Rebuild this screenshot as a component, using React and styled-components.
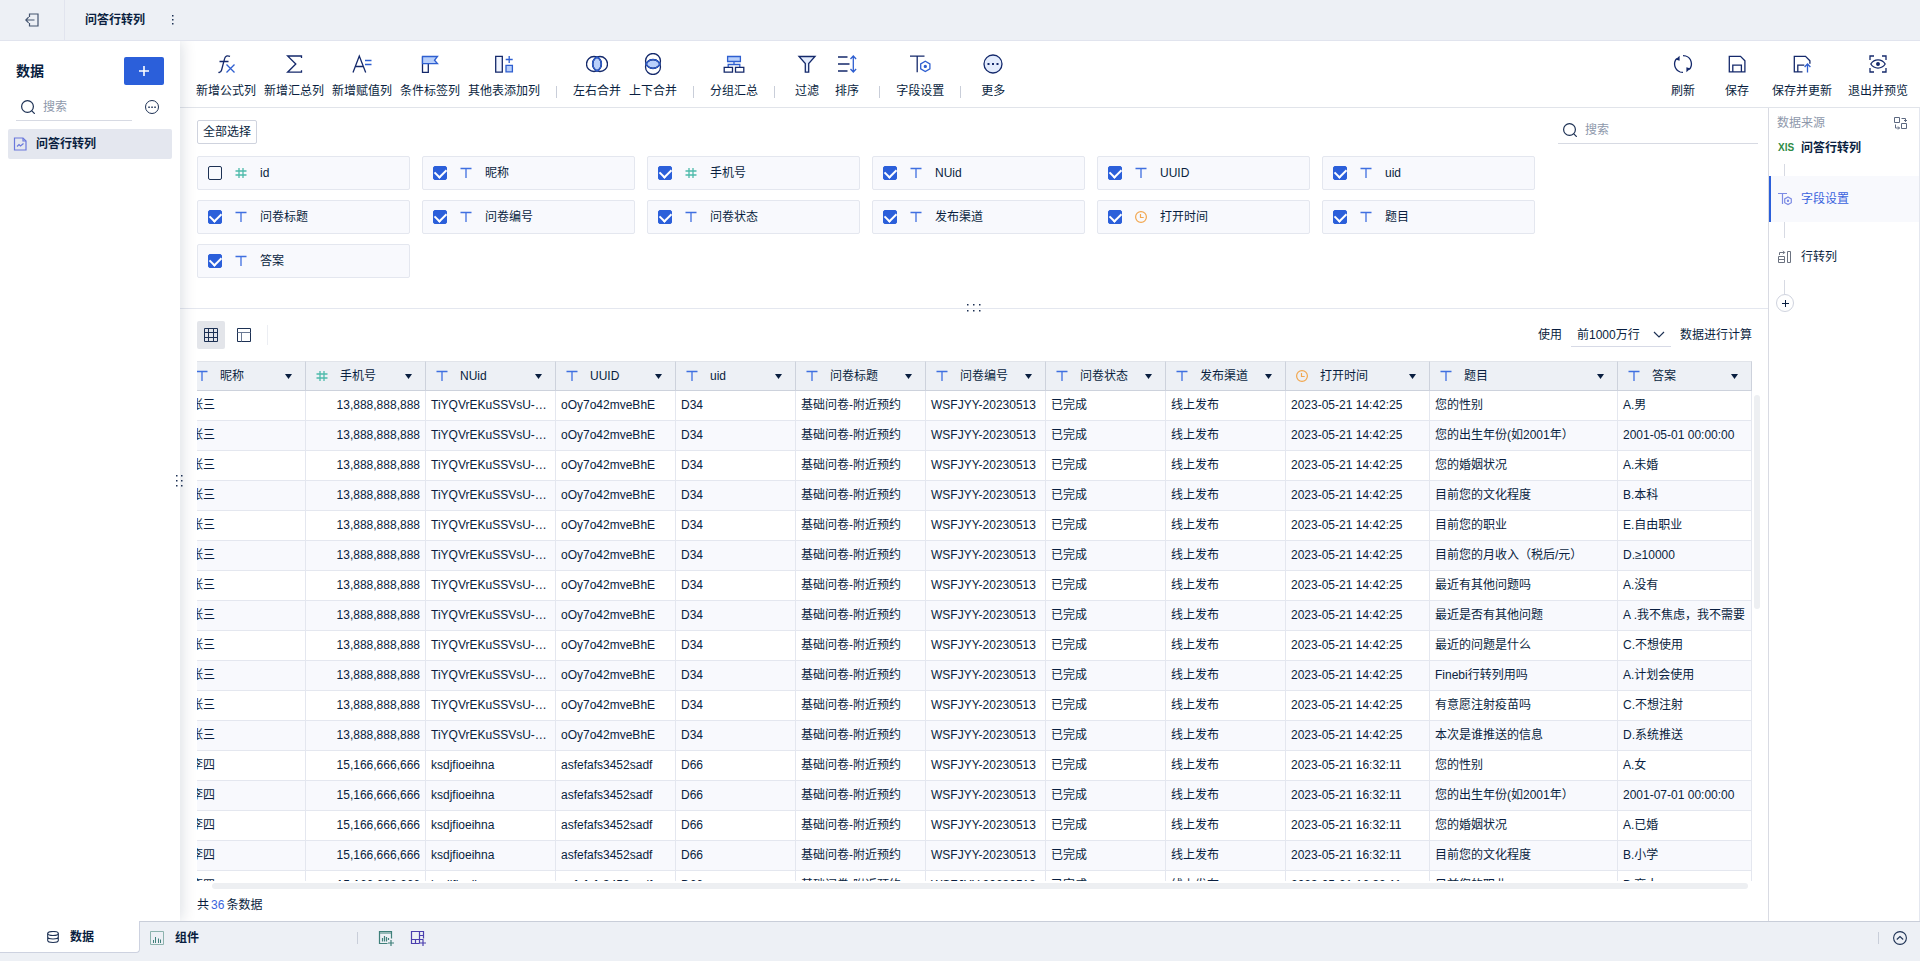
import React from 'react';
import styled, { createGlobalStyle, css } from 'styled-components';

const GlobalStyle = createGlobalStyle`
  * {
    box-sizing: border-box;
  }

  body {
    margin: 0;
    background: #fff;
    color: #091e40;
    font-family: "Liberation Sans", "Noto Sans CJK SC", sans-serif;
    font-size: 12px;
    line-height: 18px;
  }

  button, input, select {
    font: inherit;
    color: inherit;
    margin: 0;
    padding: 0;
    border: none;
    background: none;
    outline: none;
  }

  button {
    cursor: pointer;
  }

  svg {
    display: block;
    flex: none;
  }
`;

const Page = styled.div`
  display: flex;
  flex-direction: column;
  height: 100vh;
  overflow: hidden;
`;

const TopBar = styled.header`
  display: flex;
  align-items: center;
  flex: none;
  height: 41px;
  background: #edf0f5;
  border-bottom: 1px solid #e1e4ee;
`;

const BackButton = styled.button`
  display: flex;
  align-items: center;
  justify-content: center;
  width: 65px;
  height: 40px;
  border-right: 1px solid #e1e4ee;
`;

const PageTitle = styled.h1`
  margin: 0 18px 0 20px;
  font-size: 12px;
  font-weight: 700;
`;

const IconButton = styled.button`
  display: flex;
  align-items: center;
  justify-content: center;
  width: ${props => props.$size || 24}px;
  height: ${props => props.$size || 24}px;
  border-radius: 2px;
  background: ${props => (props.$active ? '#e3e5ea' : 'transparent')};
`;

const Body = styled.div`
  display: flex;
  flex: 1;
  min-height: 0;
`;

const Sidebar = styled.aside`
  position: relative;
  z-index: 1;
  flex: none;
  width: 180px;
  padding: 16px 8px;
  background: #fff;
  box-shadow: 2px 0 14px rgba(9, 30, 64, 0.14);
  clip-path: inset(0 -20px 0 0);
`;

const SideRow = styled.div`
  display: flex;
  align-items: center;
  justify-content: space-between;
  height: 28px;
  margin: 0 8px 8px;
`;

const SideTitle = styled.h2`
  margin: 0;
  font-size: 14px;
  font-weight: 700;
`;

const AddButton = styled.button`
  display: flex;
  align-items: center;
  justify-content: center;
  width: 40px;
  height: 28px;
  border-radius: 2px;
  background: #2b5fda;
`;

const SearchBox = styled.label`
  display: flex;
  align-items: center;
  gap: 8px;
  width: ${props => props.$width}px;
  height: 28px;
  padding-left: 5px;
  border-bottom: 1px solid #d7dae3;

  input {
    flex: 1;
    min-width: 0;
  }

  input::placeholder {
    color: #8e98ab;
    opacity: 1;
  }
`;

const SideItem = styled.a`
  display: flex;
  align-items: center;
  gap: 9px;
  height: 30px;
  padding-left: 5px;
  border-radius: 2px;
  background: #e4e7ef;
  color: inherit;
  font-weight: 700;
  text-decoration: none;
`;

const ResizeHandle = styled.div`
  position: absolute;
  top: 50%;
  right: -3px;
  transform: translateY(-50%);
`;

const Workspace = styled.div`
  display: flex;
  flex-direction: column;
  flex: 1;
  min-width: 0;
`;

const Toolbar = styled.div`
  display: flex;
  flex: none;
  gap: 8px;
  padding: 12px 12px 7px 16px;
  border-bottom: 1px solid #e1e4ea;
`;

const ToolGroup = styled.div`
  display: flex;
  gap: 16px;
  margin-left: auto;
`;

const ToolButton = styled.button`
  display: flex;
  flex-direction: column;
  align-items: center;
  gap: 7px;
  min-width: ${props => (props.$wide ? 38 : 32)}px;
  white-space: nowrap;
`;

const ToolDivider = styled.span`
  align-self: flex-end;
  width: 1px;
  height: 12px;
  margin: 0 8px 2px;
  background: #c9ced9;
`;

const Content = styled.div`
  display: flex;
  flex: 1;
  min-height: 0;
`;

const Center = styled.main`
  display: flex;
  flex-direction: column;
  flex: 1;
  min-width: 0;
`;

const FieldPanel = styled.section`
  position: relative;
  flex: none;
  height: 201px;
  padding: 8px 10px 0 17px;
  border-bottom: 1px solid #e4e7ef;
`;

const FieldHead = styled.div`
  display: flex;
  align-items: flex-end;
  justify-content: space-between;
  margin-bottom: 12px;
`;

const SelectAll = styled.button`
  height: 24px;
  padding: 0 5px;
  border: 1px solid #cfd3de;
  border-radius: 2px;
`;

const FieldGrid = styled.div`
  display: grid;
  grid-template-columns: repeat(auto-fill, 213px);
  gap: 10px 12px;
`;

const FieldCard = styled.label`
  display: flex;
  align-items: center;
  gap: 13px;
  height: 34px;
  padding-left: 10px;
  background: #f8f9fd;
  border: 1px solid #e4e7ef;
  border-radius: 2px;
`;

const Checkbox = styled.input.attrs({ type: 'checkbox' })`
  appearance: none;
  display: grid;
  place-content: center;
  width: 14px;
  height: 14px;
  border: 1px solid #1d3154;
  border-radius: 2px;

  &:checked {
    background: #2b5fda;
    border-color: #2b5fda;
  }

  &:checked::before {
    content: '';
    width: 9px;
    height: 6px;
    margin-bottom: 3px;
    border: solid #fff;
    border-width: 0 0 2px 2px;
    transform: rotate(-45deg);
  }
`;

const SplitHandle = styled.div`
  position: absolute;
  bottom: -4px;
  left: 50%;
  transform: translateX(-50%);
`;

const DataPanel = styled.section`
  display: flex;
  flex-direction: column;
  flex: 1;
  min-height: 0;
  padding: 12px 8px 7px 17px;
`;

const ViewBar = styled.div`
  display: flex;
  align-items: center;
  flex: none;
  gap: 5px;
  margin-bottom: 12px;
`;

const ViewDivider = styled.span`
  width: 1px;
  height: 20px;
  margin-left: 4px;
  background: #eceef3;
`;

const RowLimit = styled.div`
  display: flex;
  align-items: center;
  gap: 9px;
  margin-left: auto;
  padding-right: 8px;
`;

const SelectWrap = styled.span`
  position: relative;

  select {
    appearance: none;
    width: 100px;
    height: 24px;
    padding-left: 6px;
    border-bottom: 1px solid #d7dae6;
  }

  svg {
    position: absolute;
    right: 6px;
    top: 8px;
    pointer-events: none;
  }
`;

const TableArea = styled.div`
  display: flex;
  flex: 1;
  gap: 2px;
  min-height: 0;
`;

const TableClip = styled.div`
  display: flex;
  justify-content: flex-end;
  align-items: flex-start;
  flex: 1;
  min-width: 0;
  overflow: hidden;
`;

const VScroll = styled.div`
  flex: none;
  width: 6px;
  padding-top: 34px;

  &::before {
    content: '';
    display: block;
    height: 44%;
    border-radius: 3px;
    background: #edeff2;
  }
`;

const HScroll = styled.div`
  flex: none;
  height: 6px;
  margin: 2px 12px 7px 15px;
  border-radius: 3px;
  background: #edeff2;
`;

const DataTable = styled.table`
  flex: none;
  width: 1566px;
  table-layout: fixed;
  border-collapse: separate;
  border-spacing: 0;
`;

const cell = css`
  height: 30px;
  padding: 0 5px 2px;
  border-right: 1px solid #e4e7ef;
  border-bottom: 1px solid #e4e7ef;
  overflow: hidden;
  white-space: nowrap;
  text-overflow: ellipsis;
`;

const Th = styled.th`
  ${cell}
  padding: 0 13px 0 10px;
  border-top: 1px solid #e1e4ea;
  border-right-color: #cdd2dc;
  border-bottom-color: #cdd2dc;
  background: #edf0f5;
  font-weight: 400;

  div {
    display: flex;
    align-items: center;
    gap: 12px;
  }

  button {
    margin-left: auto;
  }
`;

const Td = styled.td`
  ${cell}
  text-align: ${props => (props.$number ? 'right' : 'left')};
`;

const Tr = styled.tr`
  &:nth-child(even) {
    background: #f8f9fd;
  }
`;

const Count = styled.p`
  flex: none;
  margin: 0;

  span {
    margin: 0 2px;
    color: #3b64dd;
  }
`;

const StepPanel = styled.aside`
  flex: none;
  width: 152px;
  border-left: 1px solid #d9dbe3;
  border-right: 1px solid #e4e7ef;
`;

const StepHead = styled.div`
  display: flex;
  align-items: center;
  justify-content: space-between;
  height: 30px;
  padding: 0 12px 0 8px;
  color: #8e98ab;
`;

const Step = styled.a`
  display: flex;
  align-items: center;
  gap: 9px;
  height: ${props => props.$height}px;
  padding-left: 7px;
  border-left: 2px solid ${props => (props.$active ? '#2b5fda' : 'transparent')};
  background: ${props => (props.$active ? '#f8f9fd' : 'transparent')};
  color: ${props => (props.$active ? '#3b64dd' : 'inherit')};
  font-weight: ${props => (props.$bold ? 700 : 400)};
  text-decoration: none;
`;

const Connector = styled.div`
  width: 1px;
  height: ${props => props.$height}px;
  margin: ${props => props.$top || 0}px 0 0 15px;
  background: #d7dae3;
`;

const AddStep = styled.button`
  display: flex;
  align-items: center;
  justify-content: center;
  width: 18px;
  height: 18px;
  margin-left: 7px;
  border: 1px solid #cfd3de;
  border-radius: 50%;
`;

const Xls = styled.span`
  width: 14px;
  color: #2e8b46;
  font-size: 10px;
`;

const Footer = styled.footer`
  display: flex;
  align-items: flex-start;
  flex: none;
  height: 40px;
  background: #edf0f5;
`;

const DataTab = styled.button`
  display: flex;
  align-items: center;
  gap: 11px;
  width: 140px;
  height: 32px;
  padding-left: 47px;
  border: solid #cdd2e0;
  border-width: 0 1px 1px 0;
  border-bottom-right-radius: 4px;
  background: #fff;
  font-weight: 700;
`;

const FooterBar = styled.div`
  display: flex;
  align-items: center;
  flex: 1;
  height: 33px;
  border-top: 1px solid #c9ced9;
`;

const ComponentTab = styled.button`
  display: flex;
  align-items: center;
  gap: 11px;
  width: 217px;
  padding-left: 10px;
  font-weight: 700;
`;

const FooterDivider = styled.span`
  width: 1px;
  height: 12px;
  margin-left: ${props => (props.$push ? 'auto' : 0)};
  background: #c9ced9;
`;

const FooterActions = styled.div`
  display: flex;
  gap: 8px;
  padding: 0 ${props => props.$right || 0}px 0 ${props => props.$left || 0}px;
`;

const navy = '#14296b';
const blue = '#2f5fd0';
const sky = '#b9d0fb';

const Icon = ({ size = 22, height, stroke = navy, width = 1.3, children }) => (
    <svg width={size} height={height || size} viewBox={`0 0 ${size} ${height || size}`} fill="none" stroke={stroke} strokeWidth={width} aria-hidden="true">
        {children}
    </svg>
);

const toolIcons = {
    formula: (
        <Icon>
            <path d="M15 3.3c-3-1.2-4.8-.3-5.4 2.4L6.6 17c-.5 1.8-1.5 2.8-3.2 2.4M4.5 8.5h9" />
            <path d="M11.5 11.5l8 8M19.5 11.5l-8 8" stroke={blue} />
        </Icon>
    ),
    sum: (
        <Icon>
            <path d="M18.5 5V3H4.6l8.2 8-8.2 8.2h13.9v-2" />
        </Icon>
    ),
    assign: (
        <Icon>
            <path d="M2 19.5L8.3 3l6.4 16.5M4.3 13.5h8" />
            <path d="M14 7.5h6.5M14 11.5h6.5" stroke={blue} />
        </Icon>
    ),
    flag: (
        <Icon>
            <path d="M3.5 3.5v15.8h5.8v-8.6" />
            <path d="M3.5 3.5h15l-3 3.8 3 3.4h-15z" fill={sky} stroke={blue} />
        </Icon>
    ),
    addColumn: (
        <Icon>
            <path d="M2.7 3.3h6.6v15.8H2.7z" fill="#f0f5ff" />
            <path d="M13 12.3h6.4v6.6H13z" fill={sky} stroke={blue} />
            <path d="M16.2 3v7M12.7 6.5h7" stroke={blue} />
        </Icon>
    ),
    mergeX: (
        <Icon>
            <path d="M11 4.1a7.7 7.7 0 0 1 0 13.8a7.7 7.7 0 0 1 0-13.8z" fill={sky} />
            <circle cx="8" cy="11" r="7.5" />
            <circle cx="14" cy="11" r="7.5" />
            <path d="M11 4.1a7.7 7.7 0 0 1 0 13.8a7.7 7.7 0 0 1 0-13.8z" stroke={blue} />
        </Icon>
    ),
    mergeY: (
        <Icon>
            <path d="M4.1 11a7.7 7.7 0 0 1 13.8 0a7.7 7.7 0 0 1-13.8 0z" fill={sky} />
            <circle cx="11" cy="8" r="7.5" />
            <circle cx="11" cy="14" r="7.5" />
            <path d="M4.1 11a7.7 7.7 0 0 1 13.8 0a7.7 7.7 0 0 1-13.8 0z" stroke={blue} />
        </Icon>
    ),
    group: (
        <Icon>
            <path d="M11 8.5v3M5.2 14.3v-2.8h11.6v2.8" stroke={blue} />
            <path d="M4.6 3.5h12.8v5H4.6z" fill={sky} stroke={blue} />
            <path d="M1.2 14.3h8.3v4.8H1.2zM12.5 14.3h8.3v4.8h-8.3z" fill="#fff" />
        </Icon>
    ),
    filter: (
        <Icon>
            <path d="M3 3.5h16l-6.3 7v8.7H9.3v-8.7z" fill="#e3ecfd" />
        </Icon>
    ),
    sort: (
        <Icon>
            <path d="M2 4h9.5M2 11h11.5M2 18h9.5" />
            <path d="M17.3 3.5v15M14.5 6l2.8-3 2.8 3M14.5 16l2.8 3 2.8-3" stroke={blue} />
        </Icon>
    ),
    setting: (
        <Icon>
            <path d="M1 3.2h14.5M8.2 3.2v16" />
            <path d="M16.3 8.2l4.6 2.7v5l-4.6 2.7-4.6-2.7v-5z" fill="#fff" stroke={blue} />
            <circle cx="16.3" cy="13.4" r="1" fill={blue} stroke={blue} />
        </Icon>
    ),
    more: (
        <Icon>
            <circle cx="11" cy="11" r="9" fill="#e3ecfd" />
            <path d="M5.5 11h2M10 11h2M14.5 11h2" strokeWidth="2" />
        </Icon>
    ),
    refresh: (
        <Icon>
            <path d="M8.2 19a8.3 8.3 0 0 1-3.4-13.5M13.8 3a8.3 8.3 0 0 1 3.4 13.5M11 2.6c1 0 2 .1 2.9.4M11 19.4c-1 0-2-.1-2.9-.4" />
            <path d="M3.6 6.5L7.6 2.8v5zM18.4 15.5l-4 3.7v-5z" fill={navy} stroke="none" />
        </Icon>
    ),
    save: (
        <Icon>
            <path d="M3.3 3.3h11.2l4.4 4.4v11.2H3.3zM6.8 18.9v-6.7h8.6v6.7" />
        </Icon>
    ),
    saveUpdate: (
        <Icon>
            <path d="M11.5 18.9H3.3V3.3h11.2l4.4 4.4v3M6.8 18.9v-6.7h6.5" />
            <path d="M16.5 19.5v-8M13.6 14l2.9-3 2.9 3" stroke={blue} />
        </Icon>
    ),
    preview: (
        <Icon>
            <path d="M3 7V3h4M15 3h4v4M19 15v4h-4M7 19H3v-4" />
            <path d="M3.8 11c3.6-5.4 10.8-5.4 14.4 0c-3.6 5.4-10.8 5.4-14.4 0z" />
            <circle cx="11" cy="11" r="1.3" fill={navy} />
        </Icon>
    ),
};

const SearchIcon = () => (
    <Icon size={14} stroke="#1d3154" width={1.2}>
        <circle cx="6.5" cy="6.5" r="5.9" />
        <path d="M10.8 10.8l3 3" />
    </Icon>
);

const PlusIcon = ({ size, color, width }) => (
    <Icon size={size} stroke={color} width={width}>
        <path d={`M${size / 2} 0v${size}M0 ${size / 2}h${size}`} />
    </Icon>
);

const MoreCircle = () => (
    <Icon size={14} stroke="#1d3154" width={1}>
        <circle cx="7" cy="7" r="6.5" />
        <path d="M3.3 7.2h1.5M6.3 7.2h1.5M9.3 7.2h1.5" strokeWidth="1.4" />
    </Icon>
);

const TypeIcon = ({ type }) => {
    if (type === 'number') {
        return (
            <Icon size={12} stroke="#4dbbab" width={1.3}>
                <path d="M4 1v10M8 1v10M.5 4h11M.5 8h11" />
            </Icon>
        );
    }
    if (type === 'time') {
        return (
            <Icon size={12} stroke="#f2a74f" width={1.2}>
                <circle cx="6" cy="6" r="5.4" />
                <path d="M5.5 3v3.5h3.2" />
            </Icon>
        );
    }
    return (
        <Icon size={12} stroke="#3f6fe0" width={1.3}>
            <path d="M.5 1.5h11M6 1.5V11" />
        </Icon>
    );
};

const Dots = ({ columns, rows, gapX, gapY }) => (
    <svg width={(columns - 1) * gapX + 2} height={(rows - 1) * gapY + 2} fill="#1d3154" aria-hidden="true">
        {Array.from({ length: columns * rows }, (_, i) => (
            <rect key={i} x={(i % columns) * gapX} y={Math.floor(i / columns) * gapY} width="1.5" height="1.5" />
        ))}
    </svg>
);

const tools = [
    { icon: 'formula', label: '新增公式列' },
    { icon: 'sum', label: '新增汇总列' },
    { icon: 'assign', label: '新增赋值列' },
    { icon: 'flag', label: '条件标签列' },
    { icon: 'addColumn', label: '其他表添加列' },
    null,
    { icon: 'mergeX', label: '左右合并' },
    { icon: 'mergeY', label: '上下合并' },
    null,
    { icon: 'group', label: '分组汇总' },
    null,
    { icon: 'filter', label: '过滤' },
    { icon: 'sort', label: '排序' },
    null,
    { icon: 'setting', label: '字段设置' },
    null,
    { icon: 'more', label: '更多' },
];

const actions = [
    { icon: 'refresh', label: '刷新' },
    { icon: 'save', label: '保存' },
    { icon: 'saveUpdate', label: '保存并更新' },
    { icon: 'preview', label: '退出并预览' },
];

const columns = [
    { name: '昵称', width: 120 },
    { name: '手机号', width: 120, type: 'number' },
    { name: 'NUid', width: 130 },
    { name: 'UUID', width: 120 },
    { name: 'uid', width: 120 },
    { name: '问卷标题', width: 130 },
    { name: '问卷编号', width: 120 },
    { name: '问卷状态', width: 120 },
    { name: '发布渠道', width: 120 },
    { name: '打开时间', width: 144, type: 'time' },
    { name: '题目', width: 188 },
    { name: '答案', width: 134 },
];

const fields = [{ name: 'id', type: 'number', off: true }, ...columns];

const survey = ['基础问卷-附近预约', 'WSFJYY-20230513', '已完成', '线上发布'];
const zhang = ['张三', '13,888,888,888', 'TiYQVrEKuSSVsU-kLmQ', 'oOy7o42mveBhE', 'D34', ...survey, '2023-05-21 14:42:25'];
const li = ['李四', '15,166,666,666', 'ksdjfioeihna', 'asfefafs3452sadf', 'D66', ...survey, '2023-05-21 16:32:11'];

const rows = [
    [...zhang, '您的性别', 'A.男'],
    [...zhang, '您的出生年份(如2001年）', '2001-05-01 00:00:00'],
    [...zhang, '您的婚姻状况', 'A.未婚'],
    [...zhang, '目前您的文化程度', 'B.本科'],
    [...zhang, '目前您的职业', 'E.自由职业'],
    [...zhang, '目前您的月收入（税后/元）', 'D.≥10000'],
    [...zhang, '最近有其他问题吗', 'A.没有'],
    [...zhang, '最近是否有其他问题', 'A .我不焦虑，我不需要'],
    [...zhang, '最近的问题是什么', 'C.不想使用'],
    [...zhang, 'Finebi行转列用吗', 'A.计划会使用'],
    [...zhang, '有意愿注射疫苗吗', 'C.不想注射'],
    [...zhang, '本次是谁推送的信息', 'D.系统推送'],
    [...li, '您的性别', 'A.女'],
    [...li, '您的出生年份(如2001年）', '2001-07-01 00:00:00'],
    [...li, '您的婚姻状况', 'A.已婚'],
    [...li, '目前您的文化程度', 'B.小学'],
    [...li, '目前您的职业', 'B.商人'],
];

const App = () => {
    return (
        <Page>
            <GlobalStyle />
            <TopBar>
                <BackButton aria-label="返回">
                    <Icon size={14} stroke="#44546f" width={1.2}>
                        <path d="M4.5 4V1h8.5v12H4.5v-3M.8 7h8.7M3.6 4.2L.8 7l2.8 2.8" />
                    </Icon>
                </BackButton>
                <PageTitle>问答行转列</PageTitle>
                <IconButton $size={20} aria-label="菜单">
                    <Dots columns={1} rows={3} gapX={4} gapY={4} />
                </IconButton>
            </TopBar>
            <Body>
                <Sidebar>
                    <SideRow>
                        <SideTitle>数据</SideTitle>
                        <AddButton aria-label="添加"><PlusIcon size={10} color="#fff" width={1.6} /></AddButton>
                    </SideRow>
                    <SideRow>
                        <SearchBox $width={116}>
                            <SearchIcon />
                            <input type="text" placeholder="搜索" aria-label="搜索" />
                        </SearchBox>
                        <IconButton aria-label="更多"><MoreCircle /></IconButton>
                    </SideRow>
                    <SideItem href="#data">
                        <Icon size={14} stroke="#6a78dc" width={1.2}>
                            <path d="M1.5 1h8.5l3 3v9H1.5z" />
                            <path d="M10 1v3h3" />
                            <path d="M4 9.5l2-2 1.5 1.5 3-2.5" />
                        </Icon>
                        问答行转列
                    </SideItem>
                    <ResizeHandle><Dots columns={2} rows={3} gapX={5} gapY={5} /></ResizeHandle>
                </Sidebar>
                <Workspace>
                    <Toolbar>
                        {tools.map((tool, i) => (tool ? (
                            <ToolButton key={tool.label}>
                                {toolIcons[tool.icon]}
                                {tool.label}
                            </ToolButton>
                        ) : <ToolDivider key={i} />))}
                        <ToolGroup>
                            {actions.map(action => (
                                <ToolButton key={action.label} $wide>
                                    {toolIcons[action.icon]}
                                    {action.label}
                                </ToolButton>
                            ))}
                        </ToolGroup>
                    </Toolbar>
                    <Content>
                        <Center>
                            <FieldPanel>
                                <FieldHead>
                                    <SelectAll>全部选择</SelectAll>
                                    <SearchBox $width={200}>
                                        <SearchIcon />
                                        <input type="text" placeholder="搜索" aria-label="搜索字段" />
                                    </SearchBox>
                                </FieldHead>
                                <FieldGrid>
                                    {fields.map(field => (
                                        <FieldCard key={field.name}>
                                            <Checkbox defaultChecked={!field.off} />
                                            <TypeIcon type={field.type} />
                                            {field.name}
                                        </FieldCard>
                                    ))}
                                </FieldGrid>
                                <SplitHandle><Dots columns={3} rows={2} gapX={6} gapY={6} /></SplitHandle>
                            </FieldPanel>
                            <DataPanel>
                                <ViewBar>
                                    <IconButton $size={28} $active aria-label="表格">
                                        <Icon size={14} stroke="#1d3154" width={1}>
                                            <path d="M.5.5h13v13H.5zM4.5.5v13M9.5.5v13M.5 4.5h13M.5 9.5h13" />
                                        </Icon>
                                    </IconButton>
                                    <IconButton $size={28} aria-label="布局">
                                        <Icon size={14} stroke="#1d3154" width={1}>
                                            <path d="M.5.5h13v13H.5z" />
                                            <path d="M.5 4.5h13M4.5 4.5v9" stroke="#6b7a94" />
                                        </Icon>
                                    </IconButton>
                                    <ViewDivider />
                                    <RowLimit>
                                        <label htmlFor="limit">使用</label>
                                        <SelectWrap>
                                            <select id="limit">
                                                <option>前1000万行</option>
                                            </select>
                                            <Icon size={12} height={8} stroke="#1d3154" width={1.2}>
                                                <path d="M1 1l5 5 5-5" />
                                            </Icon>
                                        </SelectWrap>
                                        <span>数据进行计算</span>
                                    </RowLimit>
                                </ViewBar>
                                <TableArea>
                                    <TableClip>
                                        <DataTable>
                                            <colgroup>
                                                {columns.map(column => (
                                                    <col key={column.name} width={column.width} />
                                                ))}
                                            </colgroup>
                                            <thead>
                                                <tr>
                                                    {columns.map(column => (
                                                        <Th key={column.name}>
                                                            <div>
                                                                <TypeIcon type={column.type} />
                                                                {column.name}
                                                                <button aria-label={column.name}>
                                                                    <svg width="7" height="5" fill="#091e40"><path d="M0 0h7L3.5 5z" /></svg>
                                                                </button>
                                                            </div>
                                                        </Th>
                                                    ))}
                                                </tr>
                                            </thead>
                                            <tbody>
                                                {rows.map((row, i) => (
                                                    <Tr key={i}>
                                                        {row.map((value, j) => (
                                                            <Td key={j} $number={columns[j].type === 'number'}>{value}</Td>
                                                        ))}
                                                    </Tr>
                                                ))}
                                            </tbody>
                                        </DataTable>
                                    </TableClip>
                                    <VScroll />
                                </TableArea>
                                <HScroll />
                                <Count>共<span>36</span>条数据</Count>
                            </DataPanel>
                        </Center>
                        <StepPanel>
                            <StepHead>
                                数据来源
                                <Icon size={14} stroke="#5c6880" width={1}>
                                    <path d="M1.5 1.5h5v5h-5zM8.5 7.5h5v5h-5zM8.5 2.5h4v3M11 4l1.5 1.5L14 4M2.5 8.5v3.5h4M5 10.5L6.5 12 5 13.5" />
                                </Icon>
                            </StepHead>
                            <Step href="#source" $height={20} $bold>
                                <Xls>XlS</Xls>
                                问答行转列
                            </Step>
                            <Connector $height={12} $top={6} />
                            <Step href="#setting" $height={46} $active>
                                <Icon size={14} stroke="#7d8ce4" width={1.2}>
                                    <path d="M0 1.5h9M4.5 1.5V12" />
                                    <path d="M10 5l3.3 1.9v3.8L10 12.6l-3.3-1.9V6.9z" fill="#f8f9fd" />
                                    <circle cx="10" cy="8.8" r=".6" fill="#3b64dd" />
                                </Icon>
                                字段设置
                            </Step>
                            <Connector $height={16} />
                            <Step href="#pivot" $height={38}>
                                <Icon size={14} stroke="#6b7280" width={1}>
                                    <path d="M1.5 5V2.5h5M5 .8l1.700 1.700L5 4.200M.5 6.500h6v6h-6zM.5 9.500h6M9.500 1.500h3v11h-3z" />
                                </Icon>
                                行转列
                            </Step>
                            <Connector $height={14} $top={4} />
                            <AddStep aria-label="添加步骤"><PlusIcon size={7} color="#091e40" width={1} /></AddStep>
                        </StepPanel>
                    </Content>
                </Workspace>
            </Body>
            <Footer>
                <DataTab>
                    <Icon size={12} stroke="#1d3154" width={1.1}>
                        <ellipse cx="6" cy="2.5" rx="5.3" ry="2" />
                        <path d="M.7 2.5v7c0 2.6 10.6 2.6 10.6 0v-7M.7 6c0 2.6 10.6 2.6 10.6 0" />
                    </Icon>
                    数据
                </DataTab>
                <FooterBar>
                    <ComponentTab>
                        <Icon size={14} stroke="#8db3ae" width={1}>
                            <path d="M.5.5h13v13H.5z" />
                            <path d="M3.5 12V9M5.500 12V6M8.500 12V7.500M10.500 12V8.500" stroke="#3f807a" />
                        </Icon>
                        组件
                    </ComponentTab>
                    <FooterDivider />
                    <FooterActions $left={16}>
                        <IconButton aria-label="添加组件">
                            <Icon size={16} stroke="#3f807a" width={1.2}>
                                <path d="M9.5 13.5h-8v-12h12v7M1.5 3h12M4.5 11.5V8M6.5 11.5V6M8.5 11.5V7M10.5 10V8M13 10v6M10 13h6" />
                            </Icon>
                        </IconButton>
                        <IconButton aria-label="添加仪表板">
                            <Icon size={16} stroke="#4b3fae" width={1.2}>
                                <path d="M9.5 13.5h-8v-12h12v7M1.5 9.5h12M9.5 1.5v12M9.5 5.5h4M5.5 9.5v4M13 10v6M10 13h6" />
                            </Icon>
                        </IconButton>
                    </FooterActions>
                    <FooterDivider $push />
                    <FooterActions $left={9} $right={8}>
                        <IconButton aria-label="展开">
                            <Icon size={14} stroke="#1d3154" width={1.1}>
                                <circle cx="7" cy="7" r="6.4" />
                                <path d="M3.8 8.5L7 5.5l3.2 3" />
                            </Icon>
                        </IconButton>
                    </FooterActions>
                </FooterBar>
            </Footer>
        </Page>
    );
};

export default App;
